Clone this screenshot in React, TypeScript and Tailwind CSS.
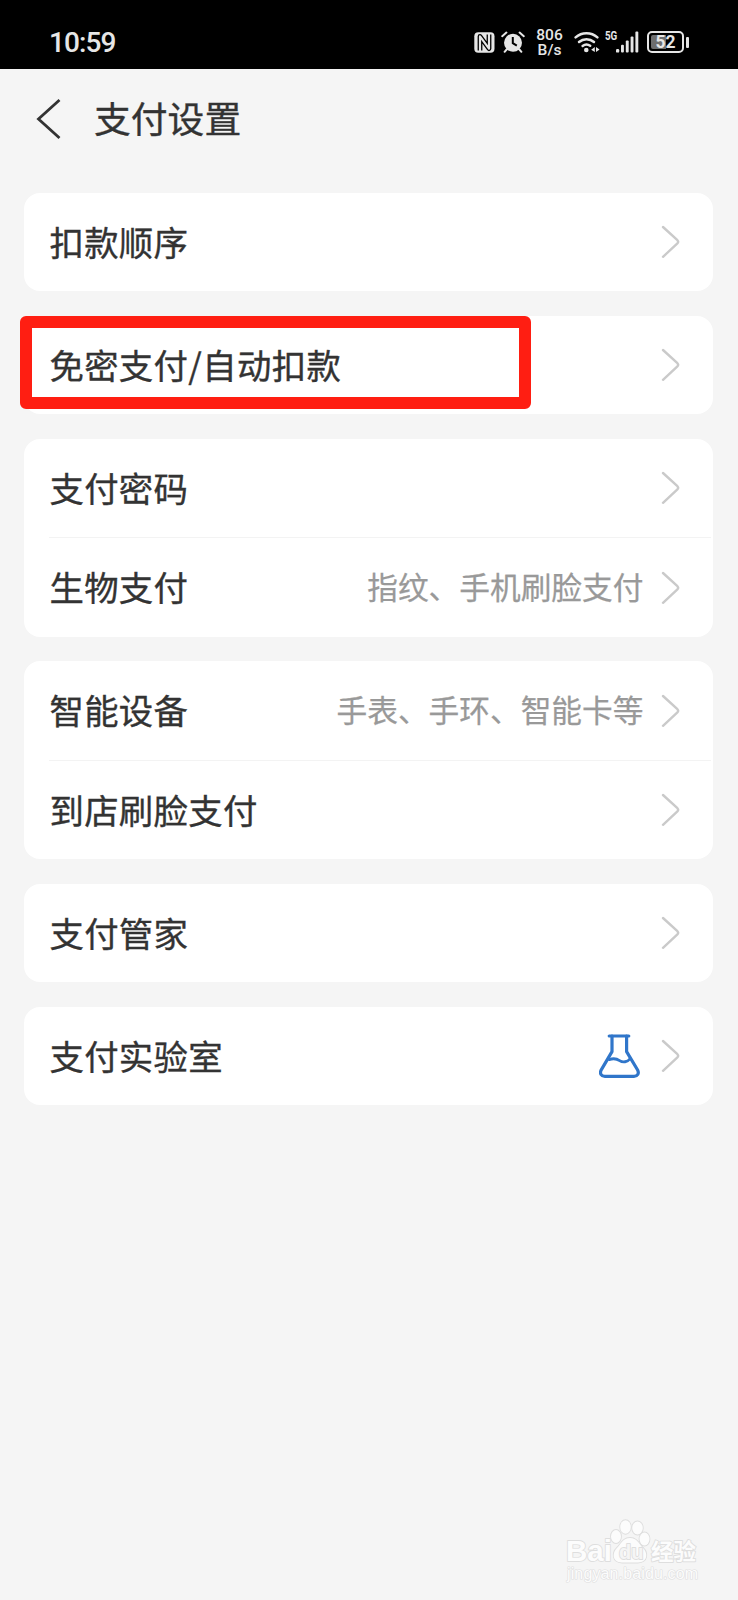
import React from "react";

interface IRow {
  label: string;
  value?: string;
  lab?: boolean;
  highlighted?: boolean;
}

const groups: IRow[][] = [
  [{ label: "扣款顺序" }],
  [{ label: "免密支付/自动扣款", highlighted: true }],
  [{ label: "支付密码" }, { label: "生物支付", value: "指纹、手机刷脸支付" }],
  [
    { label: "智能设备", value: "手表、手环、智能卡等" },
    { label: "到店刷脸支付" },
  ],
  [{ label: "支付管家" }],
  [{ label: "支付实验室", lab: true }],
];

const NfcIcon = () => (
  <svg width="21" height="21" viewBox="0 0 21 21">
    <rect x="0.3" y="0.3" width="20.2" height="20.4" rx="4" fill="#e6e6e6" />
    <path
      d="M6 18.6V4.4L15 16.6V2.4"
      fill="none"
      stroke="#000"
      strokeWidth="4.8"
      strokeLinejoin="round"
    />
    <path
      d="M6 19.4V4.4L15 16.6V1.6"
      fill="none"
      stroke="#e6e6e6"
      strokeWidth="2.2"
      strokeLinejoin="round"
    />
  </svg>
);

const AlarmIcon = () => (
  <svg width="24" height="22" viewBox="0 0 24 22" fill="none">
    <circle cx="12" cy="11.8" r="9" fill="#e6e6e6" />
    <path
      d="M1.2 5.2L5.4 1.6M22.8 5.2L18.6 1.6M5.6 18.5L3.6 20.8M18.4 18.5L20.4 20.8"
      stroke="#e6e6e6"
      strokeWidth="2"
      strokeLinecap="round"
    />
    <path d="M11.8 6V12.2L15.8 14.6" stroke="#000" strokeWidth="2" />
  </svg>
);

const WifiIcon = () => (
  <svg width="26" height="22" viewBox="0 0 26 22" fill="none">
    <g stroke="#e6e6e6" strokeWidth="2.5" strokeLinecap="round">
      <path d="M1.6 6.4A16.4 16.4 0 0 1 23.4 6.4" />
      <path d="M5 11A11.4 11.4 0 0 1 20 11" />
      <path d="M8.6 15A6.4 6.4 0 0 1 16.2 14.8" />
    </g>
    <circle cx="12.3" cy="19" r="2.3" fill="#e6e6e6" />
    <path d="M20.8 16V21L17.2 18.7ZM22 16V21L25.6 18.4Z" fill="#e6e6e6" />
  </svg>
);

const SignalIcon = () => (
  <svg width="23" height="22" viewBox="0 0 23 22" fill="#e6e6e6">
    <rect x="0" y="18" width="3.2" height="3.6" rx="1.2" />
    <rect x="5" y="13.8" width="2.9" height="7.8" rx="1" />
    <rect x="9.8" y="9.6" width="2.9" height="12" rx="1" />
    <rect x="14.6" y="5.4" width="2.9" height="16.2" rx="1" />
    <rect x="19.4" y="0.6" width="2.9" height="21" rx="1" />
  </svg>
);

const Battery = () => (
  <div className="flex items-center gap-[2px]">
    <div className="relative flex h-[22px] w-[37px] items-center justify-center rounded-[5px] border-2 border-[#e6e6e6]">
      <div className="absolute inset-y-[2px] left-[2px] w-[15px] rounded-l-[2px] bg-[#6e6e6e]" />
      <span className="relative pt-px text-[17.5px] leading-none font-bold">
        52
      </span>
    </div>
    <div className="h-[11px] w-[3px] rounded-[1px] bg-[#e6e6e6]" />
  </div>
);

const StatusBar = () => (
  <div className="flex h-[69.4px] items-center bg-black pt-[15px] pr-[49px] pl-[49px] font-[Roboto,sans-serif] text-[#e6e6e6]">
    <span className="pt-[2px] text-[28px] leading-none font-medium tracking-[-0.9px]">
      10:59
    </span>
    <div className="ml-auto flex items-center">
      <NfcIcon />
      <div className="ml-[6px]">
        <AlarmIcon />
      </div>
      <div className="ml-[11px] flex w-[27px] flex-col gap-px text-center text-[15.5px] leading-[14px] font-medium">
        <div>806</div>
        <div>B/s</div>
      </div>
      <div className="ml-[11px]">
        <WifiIcon />
      </div>
      <span className="ml-[5px] w-[11px] origin-left scale-x-75 self-start pt-[2px] text-[13px] leading-[12px] font-bold">
        5G
      </span>
      <SignalIcon />
      <div className="ml-[8px]">
        <Battery />
      </div>
    </div>
  </div>
);

const Chevron = () => (
  <svg width="19" height="34" viewBox="0 0 19 34" fill="none">
    <path
      d="M2 2L16.4 15.2Q17.9 16.8 16.4 18.3L2 31.8"
      stroke="#cacaca"
      strokeWidth="2.4"
      strokeLinecap="round"
    />
  </svg>
);

const Flask = () => (
  <svg width="42" height="46" viewBox="0 0 42 46" fill="none">
    <g
      stroke="#3076ca"
      strokeWidth="3.2"
      strokeLinecap="round"
      strokeLinejoin="round"
    >
      <path d="M10.2 3H29.8" />
      <path d="M13 3V18.6L2.4 36.6C0.2 40.6 2.4 43.4 5.8 43.4H35C38.4 43.4 40.4 40.4 38.6 37L27.6 18.6V3" />
      <path
        d="M10.2 26.6C14.2 25.2 17.6 25.6 20.6 27.6C24 29.8 28.6 29 30.8 26"
        strokeWidth="2.8"
      />
    </g>
  </svg>
);

const Row = ({ label, value, lab, highlighted }: IRow) => (
  <div className="relative flex h-[98.4px] items-center pr-[33px] pl-[25px]">
    <span className="pb-[2px] text-[34.4px] leading-none tracking-[0.35px] text-[#333] [-webkit-text-stroke:0.35px_#333]">
      {label}
    </span>
    <div className="ml-auto flex items-center">
      {value && (
        <span className="mr-[18px] pb-[2px] text-[30.7px] leading-none text-[#999] [-webkit-text-stroke:0.25px_#999]">
          {value}
        </span>
      )}
      {lab && (
        <div className="mr-[20px]">
          <Flask />
        </div>
      )}
      <Chevron />
    </div>
    {highlighted && (
      <div className="absolute top-0 -left-[4px] h-[93px] w-[511px] rounded-[6px] border-[12px] border-[#ff1e12]" />
    )}
  </div>
);

const Watermark = () => (
  <svg
    className="absolute right-[36px] bottom-[8px]"
    width="142"
    height="74"
    viewBox="0 0 142 74"
  >
    <g
      fill="#fcfcfc"
      stroke="#dedede"
      strokeWidth="1.8"
      strokeLinejoin="round"
      paintOrder="stroke"
      fontFamily="'Liberation Sans', 'Noto Sans CJK SC', sans-serif"
      fontWeight="bold"
    >
      <text x="6" y="43" fontSize="30" textLength="46" lengthAdjust="spacingAndGlyphs">
        Bai
      </text>
      <ellipse cx="56" cy="18.5" rx="5" ry="6.5" />
      <ellipse cx="65.5" cy="9" rx="5.3" ry="6.8" />
      <ellipse cx="77.5" cy="10" rx="5.3" ry="6.5" />
      <ellipse cx="84.5" cy="21" rx="5" ry="6.5" />
      <path d="M70 20C77 20 79 26 83 30C88 35 88 44 78 44.5C73 44.5 67 44.5 62 44.5C52 44 52 35 57 30C61 26 63 20 70 20Z" />
      <text x="59" y="41" fontSize="20" fill="#f5f5f5">
        du
      </text>
      <text x="91" y="42" fontSize="22.5">
        经验
      </text>
      <text
        x="7"
        y="61"
        fontSize="16"
        fontWeight="normal"
        strokeWidth="1.2"
        textLength="131"
      >
        jingyan.baidu.com
      </text>
    </g>
  </svg>
);

const App = () => {
  return (
    <div className="relative h-[1600px] w-[738px] overflow-hidden bg-[#f5f5f5] font-['Noto_Sans_CJK_SC',sans-serif]">
      <StatusBar />
      <header className="flex h-[100px] items-center pl-[36px]">
        <svg width="26" height="42" viewBox="0 0 26 42" fill="none">
          <path d="M23.5 2L2.5 21L23.5 40" stroke="#333" strokeWidth="2.8" />
        </svg>
        <h1 className="ml-[32px] pb-[3px] text-[36.8px] leading-none text-[#333] [-webkit-text-stroke:0.35px_#333]">
          支付设置
        </h1>
      </header>
      <main className="flex flex-col gap-[24.6px] pt-[23.6px] pr-[24.6px] pl-[24.4px]">
        {groups.map((rows, groupIndex) => (
          <section key={groupIndex} className="rounded-[16px] bg-white">
            {rows.map((row, index) => (
              <React.Fragment key={row.label}>
                {index > 0 && (
                  <div className="mr-[2px] ml-[25px] h-px bg-[#f3f3f3]" />
                )}
                <Row {...row} />
              </React.Fragment>
            ))}
          </section>
        ))}
      </main>
      <Watermark />
    </div>
  );
};

export default App;
